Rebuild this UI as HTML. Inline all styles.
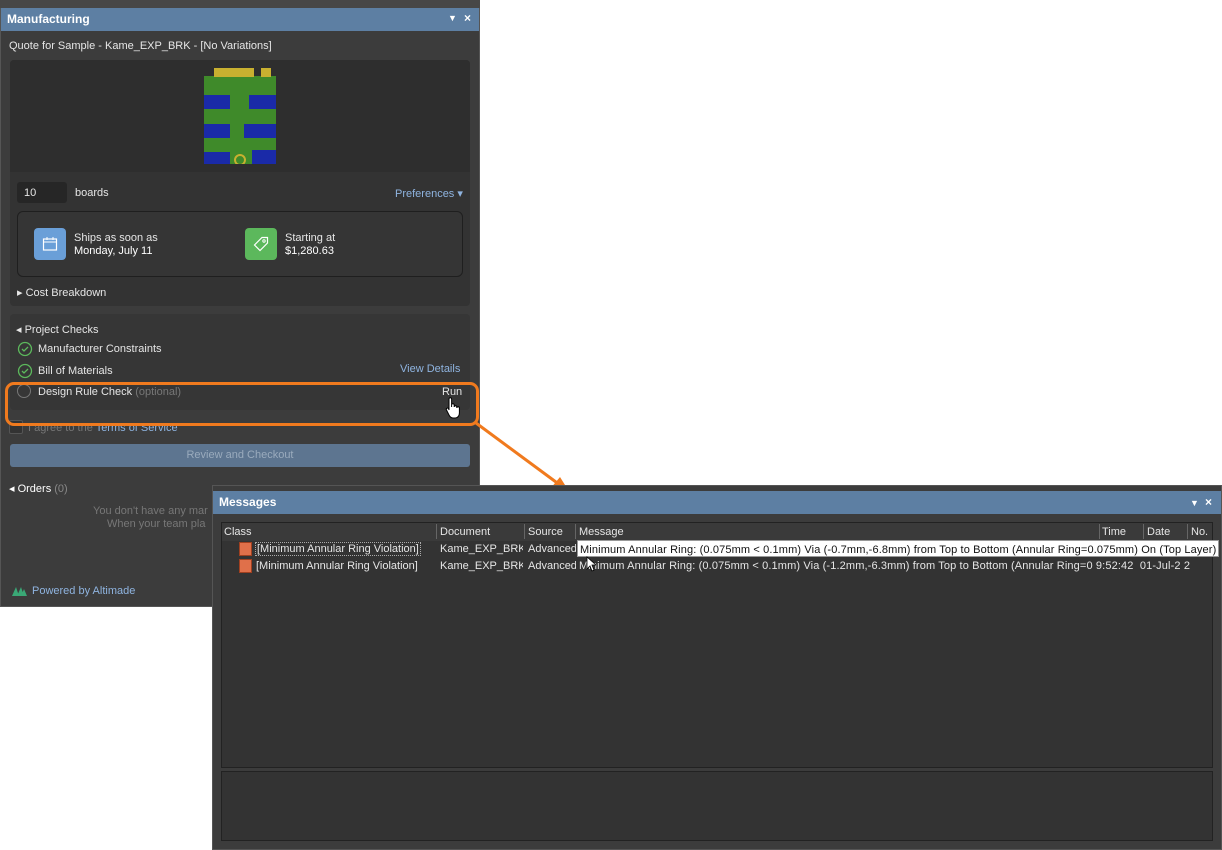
<!DOCTYPE html>
<html><head><meta charset="utf-8"><style>
*{margin:0;padding:0;box-sizing:border-box}
body{width:1222px;height:850px;background:#fff;position:relative;overflow:hidden;font-family:"Liberation Sans",sans-serif;font-size:11px;color:#e6e6e6}
.a{position:absolute;white-space:nowrap}
</style></head><body>
<div class="a" style="left:0;top:0;width:480px;height:607px;background:#3c3c3c;border:1px solid #555"></div>
<div class="a" style="left:0;top:0;width:480px;height:8px;background:#474747"></div>
<div class="a" style="left:1px;top:8px;width:478px;height:23px;background:#5d7fa3"></div>
<div class="a" style="left:7px;top:12px;font-weight:bold;font-size:12px;color:#fff">Manufacturing</div>
<div class="a" style="left:448px;top:13px;font-size:9px;color:#fff">▼</div>
<div class="a" style="left:464px;top:11px;font-size:12px;color:#fff;font-weight:bold">×</div>
<div class="a" style="left:9px;top:40px">Quote for Sample - Kame_EXP_BRK - [No Variations]</div>
<div class="a" style="left:10px;top:60px;width:460px;height:246px;background:#333;border-radius:4px"></div>
<div class="a" style="left:10px;top:60px;width:460px;height:112px;background:#2e2e2e;border-radius:4px 4px 0 0"></div>
<svg class="a" style="left:204px;top:68px" width="73" height="96">
<rect x="0" y="8" width="72" height="88" fill="#3f8a2a"/>
<rect x="10" y="0" width="40" height="9" fill="#c8b030"/><rect x="57" y="0" width="10" height="9" fill="#c8b030"/>
<rect x="0" y="27" width="26" height="14" fill="#1a2aa8"/><rect x="45" y="27" width="27" height="14" fill="#1a2aa8"/>
<rect x="0" y="56" width="26" height="14" fill="#1a2aa8"/><rect x="40" y="56" width="32" height="14" fill="#1a2aa8"/>
<rect x="0" y="84" width="26" height="12" fill="#1a2aa8"/><rect x="48" y="82" width="24" height="14" fill="#1a2aa8"/>
<circle cx="36" cy="92" r="5" fill="none" stroke="#c8b030" stroke-width="2"/>
</svg>
<div class="a" style="left:17px;top:182px;width:50px;height:21px;background:#262626;border-radius:3px;padding:5px 7px">10</div>
<div class="a" style="left:75px;top:187px">boards</div>
<div class="a" style="left:395px;top:187px;color:#8fb4e0">Preferences ▾</div>
<div class="a" style="left:17px;top:211px;width:446px;height:66px;border:1px solid #1f1f1f;border-radius:6px;background:#353535"></div>
<div class="a" style="left:34px;top:228px;width:32px;height:32px;background:#6a9fd8;border-radius:4px"></div>
<svg class="a" style="left:42px;top:236px" width="16" height="16"><rect x="1.5" y="3" width="13" height="11" fill="none" stroke="#fff" stroke-width="1.2"/><line x1="1.5" y1="6" x2="14.5" y2="6" stroke="#fff"/><line x1="5" y1="1" x2="5" y2="4" stroke="#fff"/><line x1="11" y1="1" x2="11" y2="4" stroke="#fff"/></svg>
<div class="a" style="left:74px;top:232px">Ships as soon as</div>
<div class="a" style="left:74px;top:245px;color:#fff">Monday, July 11</div>
<div class="a" style="left:245px;top:228px;width:32px;height:32px;background:#5cb85c;border-radius:4px"></div>
<svg class="a" style="left:253px;top:236px" width="16" height="16"><path d="M9 1.5H14.5V7L7 14.5 1.5 9Z" fill="none" stroke="#fff" stroke-width="1.2"/><circle cx="11" cy="5" r="1.2" fill="none" stroke="#fff"/></svg>
<div class="a" style="left:285px;top:232px">Starting at</div>
<div class="a" style="left:285px;top:245px;color:#fff">$1,280.63</div>
<div class="a" style="left:17px;top:286px">▸ Cost Breakdown</div>
<div class="a" style="left:10px;top:314px;width:460px;height:96px;background:#363636;border-radius:4px"></div>
<div class="a" style="left:16px;top:323px">◂ Project Checks</div>
<svg class="a" style="left:17px;top:341px" width="16" height="38"><circle cx="8" cy="8" r="6.5" fill="none" stroke="#5cb85c" stroke-width="1.3"/><path d="M5 8l2 2 4-4" fill="none" stroke="#5cb85c" stroke-width="1.3"/><circle cx="8" cy="30" r="6.5" fill="none" stroke="#5cb85c" stroke-width="1.3"/><path d="M5 30l2 2 4-4" fill="none" stroke="#5cb85c" stroke-width="1.3"/></svg>
<div class="a" style="left:38px;top:343px">Manufacturer Constraints</div>
<div class="a" style="left:38px;top:365px">Bill of Materials</div>
<div class="a" style="left:400px;top:363px;color:#8fb4e0">View Details</div>
<div class="a" style="left:17px;top:384px;width:14px;height:14px;border:1.3px solid #777;border-radius:50%"></div>
<div class="a" style="left:38px;top:386px">Design Rule Check <span style="color:#777">(optional)</span></div>
<div class="a" style="left:442px;top:386px">Run</div>
<svg class="a" style="left:445px;top:397px" width="16" height="24"><path d="M4 2a1.3 1.3 0 0 1 2.6 0V10l0-2a1.3 1.3 0 0 1 2.6 0v2a1.3 1.3 0 0 1 2.6 0v1a1.3 1.3 0 0 1 2.6 0v5c0 3-2 5-4 5H8c-2 0-3-1-4-3L1.5 13a1.2 1.2 0 0 1 2-1.4L4 13Z" fill="#fff" stroke="#000" stroke-width="1"/></svg>
<div class="a" style="left:9px;top:420px;width:14px;height:14px;border:1px solid #555;border-radius:2px;background:#333"></div>
<div class="a" style="left:28px;top:422px;color:#777">I agree to the <span style="color:#8fb4e0">Terms of Service</span></div>
<div class="a" style="left:10px;top:444px;width:460px;height:23px;background:#5d7590;border-radius:3px;text-align:center;line-height:23px;color:#9aabbd">Review and Checkout</div>
<div class="a" style="left:9px;top:482px;color:#fff">◂ Orders <span style="color:#888">(0)</span></div>
<div class="a" style="left:93px;top:505px;color:#777">You don't have any mar</div>
<div class="a" style="left:107px;top:518px;color:#777">When your team pla</div>
<svg class="a" style="left:12px;top:586px" width="16" height="11"><path d="M0 10L4 1 7 10ZM5 10L9 1 12 10ZM9 10L12 3 15 10Z" fill="#3aa876"/></svg>
<div class="a" style="left:32px;top:585px;color:#8fb4e0">Powered by Altimade</div>
<div class="a" style="left:5px;top:382px;width:474px;height:44px;border:3px solid #f07a1e;border-radius:9px"></div>
<svg class="a" style="left:470px;top:415px" width="110" height="85"><line x1="6" y1="8" x2="90" y2="70" stroke="#f07a1e" stroke-width="3"/><path d="M100 78L80 74 90 62Z" fill="#f07a1e"/></svg>
<div class="a" style="left:212px;top:485px;width:1010px;height:365px;background:#3c3c3c;border:1px solid #555"></div>
<div class="a" style="left:213px;top:491px;width:1008px;height:23px;background:#5d7fa3"></div>
<div class="a" style="left:219px;top:495px;font-weight:bold;font-size:12px;color:#fff">Messages</div>
<div class="a" style="left:1190px;top:498px;font-size:9px;color:#fff">▼</div>
<div class="a" style="left:1205px;top:495px;font-size:12px;color:#fff;font-weight:bold">×</div>
<div class="a" style="left:221px;top:522px;width:992px;height:246px;background:#333;border:1px solid #222"></div>
<div class="a" style="left:222px;top:523px;width:990px;height:18px;background:#3a3a3a"></div>
<div class="a" style="left:224px;top:526px">Class</div>
<div class="a" style="left:436px;top:524px;width:1px;height:15px;background:#666"></div>
<div class="a" style="left:440px;top:526px">Document</div>
<div class="a" style="left:524px;top:524px;width:1px;height:15px;background:#666"></div>
<div class="a" style="left:528px;top:526px">Source</div>
<div class="a" style="left:575px;top:524px;width:1px;height:15px;background:#666"></div>
<div class="a" style="left:579px;top:526px">Message</div>
<div class="a" style="left:1099px;top:524px;width:1px;height:15px;background:#666"></div>
<div class="a" style="left:1102px;top:526px">Time</div>
<div class="a" style="left:1143px;top:524px;width:1px;height:15px;background:#666"></div>
<div class="a" style="left:1147px;top:526px">Date</div>
<div class="a" style="left:1187px;top:524px;width:1px;height:15px;background:#666"></div>
<div class="a" style="left:1191px;top:526px">No.</div>
<div class="a" style="left:239px;top:542px;width:13px;height:14px;background:#e0704a;border:1px solid #a04020"></div>
<div class="a" style="left:239px;top:559px;width:13px;height:14px;background:#e0704a;border:1px solid #a04020"></div>
<div class="a" style="left:255px;top:542px;border:1px dotted #aaa;padding:0 1px">[Minimum Annular Ring Violation]</div>
<div class="a" style="left:440px;top:543px;width:83px;overflow:hidden">Kame_EXP_BRK.PcbDoc</div>
<div class="a" style="left:528px;top:543px;width:48px;overflow:hidden">Advanced</div>
<div class="a" style="left:577px;top:540px;width:642px;height:17px;background:#fff;color:#111;padding:3px 2px;border:1px solid #999;letter-spacing:0.13px">Minimum Annular Ring: (0.075mm &lt; 0.1mm) Via (-0.7mm,-6.8mm) from Top to Bottom (Annular Ring=0.075mm) On (Top Layer)</div>
<div class="a" style="left:256px;top:560px">[Minimum Annular Ring Violation]</div>
<div class="a" style="left:440px;top:560px;width:83px;overflow:hidden">Kame_EXP_BRK.PcbDoc</div>
<div class="a" style="left:528px;top:560px;width:48px;overflow:hidden">Advanced</div>
<div class="a" style="left:579px;top:560px;letter-spacing:0.13px">Minimum Annular Ring: (0.075mm &lt; 0.1mm) Via (-1.2mm,-6.3mm) from Top to Bottom (Annular Ring=0 9:52:42&nbsp; 01-Jul-2 2</div>
<svg class="a" style="left:586px;top:556px" width="10" height="16"><path d="M1 1V13L4 10 6 15 8 14 6 9H10Z" fill="#fff" stroke="#000" stroke-width="0.8"/></svg>
<div class="a" style="left:221px;top:771px;width:992px;height:70px;background:#333;border:1px solid #222"></div>
</body></html>
